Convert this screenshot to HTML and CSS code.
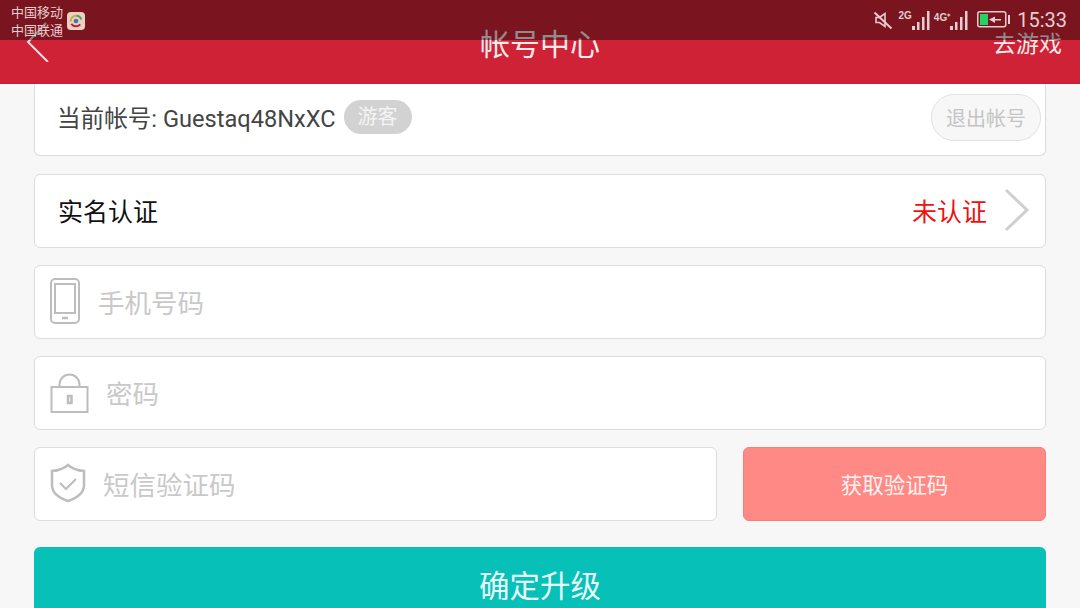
FILE: index.html
```html
<!DOCTYPE html>
<html lang="zh-CN">

<head>
    <meta charset="utf-8">
    <title>帐号中心</title>
    <link rel="stylesheet" href="styles.css">
</head>

<body>
    <div class="statusbar">
        <div class="carriers">
            <div>中国移动</div>
            <div>中国联通</div>
        </div>
        <svg class="appicon" width="18" height="18" viewBox="0 0 19 19">
            <rect width="19" height="19" rx="4" fill="#e6d2c4" />
            <path d="M4 10a5.500 5.500 0 0 1 6-6" fill="none" stroke="#d9a83a" stroke-width="2" />
            <path d="M10 4a5.500 5.500 0 0 1 5 4" fill="none" stroke="#5a9a5a" stroke-width="2" />
            <path d="M4.500 12.500a6 6 0 0 0 9.500 .5" fill="none" stroke="#c8202c" stroke-width="2" />
            <circle cx="9.500" cy="9.500" r="2.500" fill="#3a78b8" />
        </svg>
        <div class="status-right">
            <svg class="mute" width="20" height="20" viewBox="0 0 20 20" fill="none" stroke="#e6ced0" stroke-width="1.600">
                <path d="M3 7.500h3.500L12 3.500v13L6.500 12.500H3z" />
                <path d="M1.500 2.500l17 16" stroke-width="2" />
            </svg>
            <div class="signal">
                <span class="net">2G</span>
                <svg width="19" height="20" viewBox="0 0 19 20" fill="#e6ced0">
                    <rect x="0" y="16" width="3" height="4" />
                    <rect x="5" y="12" width="2.500" height="8" />
                    <rect x="10" y="7" width="2.500" height="13" />
                    <rect x="15" y="1" width="2.500" height="19" />
                </svg>
            </div>
            <div class="signal">
                <span class="net">4G⁺</span>
                <svg width="19" height="20" viewBox="0 0 19 20" fill="#e6ced0">
                    <rect x="0" y="16" width="3" height="4" />
                    <rect x="5" y="12" width="2.500" height="8" />
                    <rect x="10" y="7" width="2.500" height="13" />
                    <rect x="15" y="1" width="2.500" height="19" />
                </svg>
            </div>
            <svg class="battery" width="33" height="17" viewBox="0 0 33 17">
                <rect x="0.750" y="0.750" width="28" height="15" rx="2" fill="none" stroke="#e6ced0" stroke-width="1.500" />
                <rect x="3" y="3" width="8" height="11" fill="#22d468" />
                <path d="M12 8.500l6-3v2.500h6v1.500h-6v2.500z" fill="#e6ced0" />
                <rect x="31" y="4" width="2" height="9" fill="#e6ced0" />
            </svg>
            <span class="clock">15:33</span>
        </div>
    </div>

    <header class="topbar">
        <svg class="back" width="24" height="40" viewBox="0 0 24 40" fill="none" stroke="#f5dfe1" stroke-width="2">
            <path d="M20 1L2 20l20 20" />
        </svg>
        <h1>帐号中心</h1>
        <a class="play">去游戏</a>
    </header>

    <main>
        <section class="card account">
            <span class="account-name">当前帐号: Guestaq48NxXC</span>
            <span class="tag">游客</span>
            <button class="logout">退出帐号</button>
        </section>

        <section class="card realname">
            <span class="realname-label">实名认证</span>
            <span class="realname-state">未认证</span>
            <svg width="26" height="44" viewBox="0 0 26 44" fill="none" stroke="#cfcfcf" stroke-width="3">
                <path d="M2 2l21 20L2 42" />
            </svg>
        </section>

        <section class="card field">
            <svg class="icon" width="30" height="46" viewBox="0 0 30 46" fill="none" stroke="#bdbdbd" stroke-width="2">
                <rect x="1" y="1" width="28" height="44" rx="4" />
                <rect x="5" y="6" width="20" height="29" />
                <path d="M12 40h6" stroke-width="2.500" />
            </svg>
            <span class="placeholder">手机号码</span>
        </section>

        <section class="card field field-lock">
            <svg class="icon" width="40" height="40" viewBox="0 0 40 40" fill="none" stroke="#bdbdbd" stroke-width="2">
                <rect x="1.500" y="14" width="36" height="25" />
                <path d="M9.500 14V11.500a10 10 0 0 1 20 0V14" />
                <rect x="18" y="23" width="3.500" height="7" stroke-width="2.500" />
            </svg>
            <span class="placeholder">密码</span>
        </section>

        <div class="code-row">
            <section class="card field field-code">
                <svg class="icon" width="36" height="40" viewBox="0 0 36 40" fill="none" stroke="#bdbdbd" stroke-width="2.500">
                    <path d="M18 2c4 3.500 9 5.500 16 6v14c0 8-7 13-16 16C9 35 2 30 2 22V8c7-.5 12-2.500 16-6z" />
                    <path d="M10 20l6 6 10-10" stroke-width="2" />
                </svg>
                <span class="placeholder">短信验证码</span>
            </section>
            <button class="getcode">获取验证码</button>
        </div>

        <button class="confirm">确定升级</button>
    </main>
</body>

</html>
```

FILE: styles.css
```css
* {
    box-sizing: border-box;
}

html,
body {
    height: 608px;
}

body {
    margin: 0;
    overflow: hidden;
    position: relative;
    background-color: #f7f7f7;
    font-family: "Noto Sans CJK SC", Roboto, sans-serif;
}

button {
    font-family: inherit;
    padding: 0;
}

/* status bar lies over the red header, see-through so the arrow and title dim under it */
.statusbar {
    position: absolute;
    z-index: 2;
    top: 0;
    left: 0;
    width: 100%;
    height: 40px;
    background-color: rgba(0, 0, 0, 0.41);
    display: flex;
    align-items: center;
    padding: 1px 13px 0 11px;
    color: #e6ced0;
}

.carriers {
    font-size: 13px;
    line-height: 18px;
    margin-right: 4px;
}

.status-right {
    margin-left: auto;
    display: flex;
    align-items: center;
    margin-top: -2px;
}

.mute {
    margin-right: 1px;
}

.signal {
    display: flex;
    align-items: flex-end;
    margin-left: 5px;
}

.signal + .signal {
    margin-left: 3px;
}

.signal .net {
    font-family: "Liberation Sans", sans-serif;
    font-size: 10px;
    font-weight: bold;
    align-self: flex-start;
}

.battery {
    margin-left: 8px;
}

.clock {
    font-family: Roboto, sans-serif;
    font-size: 20px;
    line-height: 20px;
    margin-left: 7px;
}

.topbar {
    height: 84px;
    background-color: #cf2236;
    border-bottom: 1px solid #c81f33;
    display: flex;
    align-items: center;
    justify-content: center;
    position: relative;
    color: #fbeaec;
}

.topbar h1 {
    margin: 1px 0 0;
    font-size: 30px;
    font-weight: normal;
}

.back {
    position: absolute;
    left: 26px;
    top: 22px;
}

.play {
    position: absolute;
    right: 18px;
    top: 31px;
    font-size: 23px;
    line-height: 22px;
}

main {
    padding: 0 34px;
    display: flex;
    flex-direction: column;
    gap: 17px;
}

.card {
    background-color: #fff;
    border: 1px solid #dcdcdc;
    border-radius: 6px;
    height: 74px;
    display: flex;
    align-items: center;
}

.account {
    height: 72px;
    margin-bottom: 1px;
    border-top: none;
    border-radius: 0 0 6px 6px;
    padding: 0 4px 5px 22px;
}

.account-name {
    font-family: Roboto, "Noto Sans CJK SC", sans-serif;
    font-size: 23.600px;
    color: #444;
}

.tag {
    margin-left: 8px;
    width: 68px;
    height: 34px;
    border-radius: 17px;
    background-color: #d2d2d2;
    color: #f4f4f4;
    font-size: 20px;
    text-align: center;
    line-height: 32px;
}

.logout {
    margin-left: auto;
    width: 110px;
    height: 47px;
    border: 1px solid #e2e2e2;
    border-radius: 23px;
    background-color: #f7f7f7;
    color: #c4c4c4;
    font-size: 20px;
}

.realname {
    padding: 0 15px 2px 23px;
}

.realname-label {
    font-size: 25px;
    color: #111;
}

.realname-state {
    margin-left: auto;
    margin-right: 17px;
    font-size: 25px;
    color: #ee1111;
}

.field {
    padding: 0 0 2px 15px;
}

.placeholder {
    font-size: 26.500px;
    color: #c9c9c9;
    margin-left: 18px;
}

.field-lock .icon {
    margin-top: 1px;
}

.code-row {
    display: flex;
    gap: 26px;
}

.field-code {
    width: 683px;
}

.field-code .placeholder {
    margin-left: 17px;
}

.field-lock .placeholder {
    margin-left: 16px;
}

.getcode {
    flex: 1;
    border: 1px solid #f57d7a;
    border-radius: 6px;
    background-color: #ff8985;
    color: #fff3f2;
    font-size: 21.500px;
    padding-bottom: 2px;
}

.confirm {
    height: 74px;
    margin-top: 9px;
    border: none;
    border-radius: 6px;
    background-color: #07c0b8;
    color: #e9fbfa;
    font-size: 30.500px;
}
```
